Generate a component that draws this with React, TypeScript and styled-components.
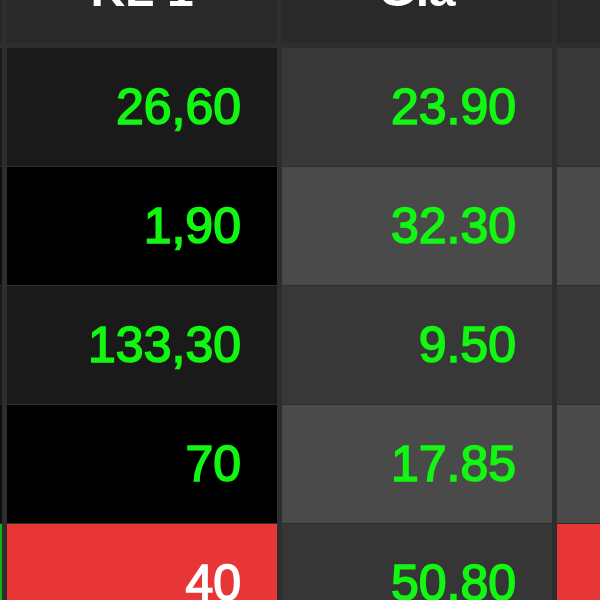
import { Fragment } from "react";
import { createGlobalStyle, styled } from "styled-components";

const GlobalStyle = createGlobalStyle`
  html, body {
    margin: 0;
    padding: 0;
    background: #2d2d2d;
    overflow: hidden;
  }
`

const Viewport = styled.div`
  width: 600px;
  height: 600px;
  overflow: hidden;
  background: #2d2d2d;
`

const Board = styled.div`
  display: grid;
  grid-template-columns: 2px 270px 270px 1fr;
  grid-template-rows: 104px;
  grid-auto-rows: 118px;
  column-gap: 5px;
  row-gap: 1px;
  margin-top: -57px;
  width: 640px;
  background: #2e2e2e;
  font-family: "Liberation Sans", Arial, sans-serif;
`

const HeadCell = styled.div`
  height: 100px;
  margin-bottom: 4px;
  background: #292929;
  color: #ffffff;
  font-size: 48px;
  font-weight: 700;
  line-height: 1;
  display: flex;
  align-items: flex-end;
  justify-content: center;
  padding-bottom: 29px;
  box-sizing: border-box;
  filter: blur(0.5px);
`

const Marker = styled.div<{ $bg: string }>`
  background: ${(p) => p.$bg};
`

const Cell = styled.div<{ $bg: string; $color?: string }>`
  background: ${(p) => p.$bg};
  color: ${(p) => p.$color ?? "#12f712"};
  -webkit-text-stroke: 1.6px ${(p) => p.$color ?? "#12f712"};
  font-size: 50px;
  font-weight: 400;
  line-height: 1;
  display: flex;
  align-items: center;
  justify-content: flex-end;
  padding-right: 36px;
  box-sizing: border-box;
`

const Value = styled.span`
  filter: blur(0.5px);
`

type Row = {
  vol: string;
  price: string;
  marker: string;
  volBg: string;
  volColor?: string;
  priceBg: string;
  nextBg: string;
}

const rows: Row[] = [
  { vol: "26,60", price: "23.90", marker: "#1a1a1a", volBg: "#1a1a1a", priceBg: "#383838", nextBg: "#383838" },
  { vol: "1,90", price: "32.30", marker: "#0d0d0d", volBg: "#000000", priceBg: "#4a4a4a", nextBg: "#4a4a4a" },
  { vol: "133,30", price: "9.50", marker: "#1a1a1a", volBg: "#1a1a1a", priceBg: "#383838", nextBg: "#383838" },
  { vol: "70", price: "17.85", marker: "#0d0d0d", volBg: "#000000", priceBg: "#4a4a4a", nextBg: "#4a4a4a" },
  { vol: "40", price: "50.80", marker: "#15b015", volBg: "#e83636", volColor: "#ffffff", priceBg: "#363636", nextBg: "#e83636" },
]

const App = () => {
  return (
    <Viewport>
      <GlobalStyle />
      <Board>
        <HeadCell />
        <HeadCell>KL 1</HeadCell>
        <HeadCell>Giá</HeadCell>
        <HeadCell />
        {rows.map((r, i) => (
          <Fragment key={i}>
            <Marker $bg={r.marker} />
            <Cell $bg={r.volBg} $color={r.volColor}>
              <Value>{r.vol}</Value>
            </Cell>
            <Cell $bg={r.priceBg}>
              <Value>{r.price}</Value>
            </Cell>
            <Cell $bg={r.nextBg} />
          </Fragment>
        ))}
      </Board>
    </Viewport>
  )
}

export default App;
